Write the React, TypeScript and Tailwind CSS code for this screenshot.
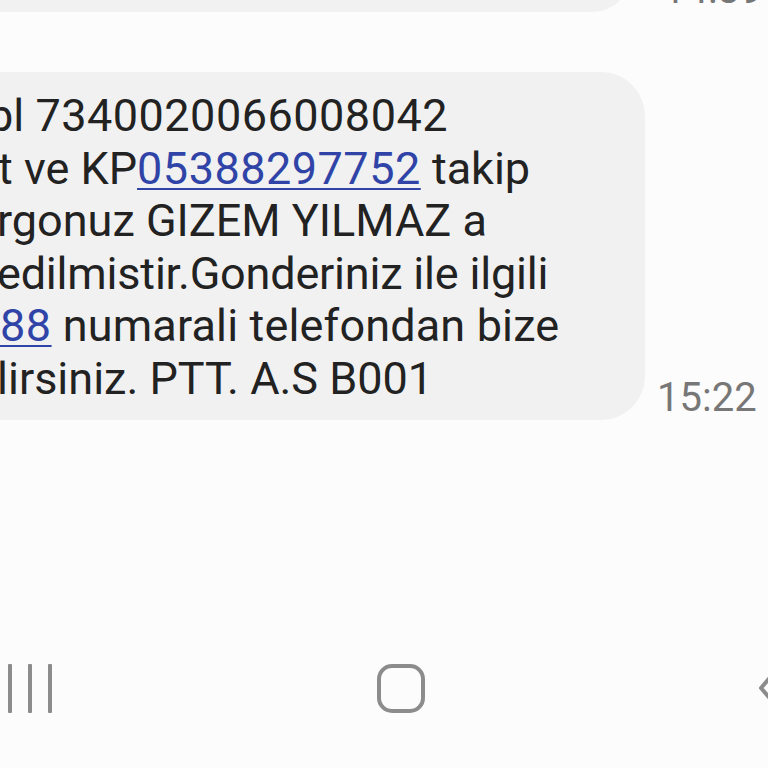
import React from "react";

export default function App() {
  const font = { fontFamily: "Roboto, 'Noto Sans', sans-serif" };
  return (
    <div
      className="w-[768px] h-[768px] bg-[#fcfcfc] overflow-hidden flex flex-col"
      style={font}
    >
      {/* previous bubble */}
      <div className="h-[12px] flex items-end shrink-0">
        <div className="w-[632px] h-[60px] shrink-0 bg-[#f1f1f1] rounded-br-[40px]" />
        <span className="self-start -mt-[30px] ml-[31px] text-[40px] leading-none text-[#777777] whitespace-nowrap">
          14:39
        </span>
      </div>

      {/* main bubble */}
      <div className="mt-[60px] flex items-end shrink-0">
        <div className="w-[645px] shrink-0 bg-[#f1f1f1] rounded-r-[44px] pt-[18px] pb-[15px] text-[45px] leading-[52.5px] text-[#222222] whitespace-nowrap">
          <div className="-ml-[12px]">
            bl <span className="tracking-[0.5px]">7340020066008042</span>
          </div>
          <div className="-ml-[2px]">
            t ve KP
            <span className="text-[#3044a8] tracking-[0.5px] underline decoration-[2px] underline-offset-[4px]">
              05388297752
            </span>{" "}
            takip
          </div>
          <div className="-ml-[3px]">rgonuz GIZEM YILMAZ a</div>
          <div className="-ml-[3px] tracking-[-0.2px]">edilmistir.Gonderiniz ile ilgili</div>
          <div className="ml-0">
            <span className="text-[#3044a8] tracking-[0.5px] underline decoration-[2px] underline-offset-[4px]">
              88
            </span>{" "}
            <span className="tracking-[0.15px]">numarali telefondan bize</span>
          </div>
          <div className="-ml-[3px]">lirsiniz. PTT. A.S B001</div>
        </div>
        <span className="ml-[12px] mb-[2px] text-[40px] leading-none text-[#777777] whitespace-nowrap">
          15:22
        </span>
      </div>

      {/* nav bar */}
      <div className="mt-auto mb-[55px] h-[50px] flex items-center shrink-0">
        <div className="ml-[8px] shrink-0 flex items-center gap-[16px] h-[49px]">
          <div className="w-[4px] h-[49px] bg-[#8c8c8c] rounded-[1px]" />
          <div className="w-[4px] h-[49px] bg-[#8c8c8c] rounded-[1px]" />
          <div className="w-[4px] h-[49px] bg-[#8c8c8c] rounded-[1px]" />
        </div>
        <div className="ml-[325px] shrink-0 w-[48px] h-[49px] border-[4px] border-[#8c8c8c] rounded-[15px]" />
        <svg className="ml-[332px] shrink-0" width="20" height="40" viewBox="0 0 20 40">
          <path
            d="M16 6 L4 20 L16 34"
            fill="none"
            stroke="#8c8c8c"
            strokeWidth="4"
            strokeLinecap="round"
            strokeLinejoin="round"
          />
        </svg>
      </div>
    </div>
  );
}
